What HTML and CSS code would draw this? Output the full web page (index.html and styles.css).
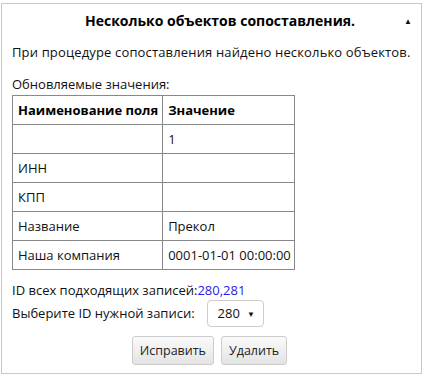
FILE: index.html
```html
<!DOCTYPE html>
<html lang="ru">
<head>
    <meta charset="UTF-8">
    <title>Несколько объектов сопоставления</title>
    <link rel="stylesheet" href="styles.css">
</head>
<body>
    <div class="panel">
        <div class="panel-head">
            <span class="panel-title">Несколько объектов сопоставления.</span>
            <span class="toggle">&#9650;</span>
        </div>
        <p class="intro">При процедуре сопоставления найдено несколько объектов.</p>
        <p class="caption">Обновляемые значения:</p>
        <table class="fields">
            <tr><th>Наименование поля</th><th>Значение</th></tr>
            <tr><td></td><td>1</td></tr>
            <tr><td>ИНН</td><td></td></tr>
            <tr><td>КПП</td><td></td></tr>
            <tr><td>Название</td><td>Прекол</td></tr>
            <tr><td>Наша компания</td><td>0001-01-01 00:00:00</td></tr>
        </table>
        <p class="ids">ID всех подходящих записей:<span class="id-list">280,281</span></p>
        <div class="pick">
            <span>Выберите ID нужной записи:</span>
            <div class="select">280 <span class="arrow">&#9660;</span></div>
        </div>
        <div class="actions">
            <button class="btn">Исправить</button>
            <button class="btn">Удалить</button>
        </div>
    </div>
</body>
</html>
```
FILE: styles.css
```css
body {
    margin: 0;
    font-family: 'Open Sans', sans-serif;
    font-size: 13px;
    line-height: 17px;
    color: #111;
    background: #fff;
}

.panel {
    margin: 3px 1px 0 1px;
    height: 371px;
    box-sizing: border-box;
    border: 1px solid #c8c8c8;
    padding: 0 9px 0 10px;
}

.panel-head {
    display: flex;
    align-items: center;
    height: 33px;
}

.panel-title {
    flex: 1;
    text-align: center;
    font-size: 14px;
    font-weight: bold;
    color: #000;
    padding-left: 24px;
}

.toggle {
    font-size: 8px;
    width: 8px;
}

.intro {
    margin: 7px 0 0 0;
    letter-spacing: 0.15px;
}

.caption {
    margin: 15px 0 0 0;
}

.fields {
    border-collapse: collapse;
    border: 1px solid #222;
    margin-top: 2px;
}

.fields th,
.fields td {
    border: 1px solid #888;
    height: 28px;
    padding: 0 4px 0 5px;
    text-align: left;
    white-space: nowrap;
}

.fields td:last-child {
    padding-right: 3px;
}

.fields th {
    font-weight: bold;
    color: #000;
}

.ids {
    margin: 12px 0 0 0;
}

.id-list {
    color: #2a1aee;
}

.pick {
    display: flex;
    align-items: center;
    gap: 12px;
    margin-top: 1px;
}

.select {
    border: 1px solid #ccc;
    border-radius: 4px;
    height: 25px;
    padding: 0 8px 0 10px;
    display: flex;
    align-items: center;
    gap: 7px;
}

.arrow {
    font-size: 8px;
}

.actions {
    display: flex;
    justify-content: center;
    gap: 7px;
    margin-top: 9px;
    padding-right: 5px;
}

.btn {
    font-family: 'Open Sans', sans-serif;
    font-size: 12.5px;
    color: #222;
    height: 29px;
    padding: 0 7px;
    border: 1px solid #ccc;
    border-radius: 3px;
    background: linear-gradient(#fafafa, #e4e4e4);
}
```
